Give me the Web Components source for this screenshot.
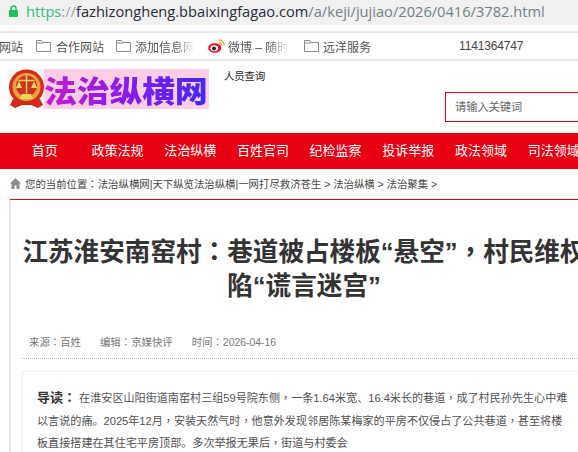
<!DOCTYPE html>
<html lang="zh"><head><meta charset="utf-8"><style>
html,body{margin:0;padding:0;background:#fff;width:578px;height:452px;overflow:hidden;font-family:"Liberation Sans","Noto Sans CJK SC",sans-serif}
page-root{display:block;width:578px;height:452px;overflow:hidden}
</style></head><body>
<page-root></page-root>
<script>
const def=(n,html)=>{customElements.define(n,class extends HTMLElement{constructor(){super();this.attachShadow({mode:'open'}).innerHTML=html}})};
const F='"Liberation Sans","Noto Sans CJK SC",sans-serif';
const P=s=>s.replace(/[：，]/g,m=>`<span lang='zh-TW' style='font-family:"Noto Sans CJK TC";line-height:1'>${m}</span>`);
const folder='<svg width="15" height="12" viewBox="0 0 15 12" fill="none" stroke="#8a8a8a"><path d="M.5 11.500V.5h5l1.500 2h7.500v9z"/><path d="M.5 3h6.500"/></svg>';
def('url-bar',`<style>:host{display:flex;align-items:center;height:25px;box-sizing:border-box;padding-bottom:3px;background:#f1f1f1;font:14.650px "Open Sans",sans-serif;white-space:nowrap;overflow:hidden;position:relative}
svg{flex:none;margin-left:9px;margin-right:8px}.g{color:#35bb80}.s{color:#9aa0a6}.d{color:#222b3a}.p{color:#6f7f88}</style>
<svg width="9" height="12" viewBox="0 0 9 12"><path d="M2 5.500V3.500a2.500 2.500 0 0 1 5 0v2" fill="none" stroke="#1fc15e" stroke-width="1.500"/><rect x="0" y="5" width="9" height="7" rx=".8" fill="#1fc15e"/></svg>
<span class="g">https</span><span class="s">://</span><span class="d">fazhizongheng.bbaixingfagao.com</span><span class="p">/a/keji/jujiao/2026/0416/3782.html</span>`);
def('book-bar',`<style>:host{display:block;height:30px;box-sizing:border-box;margin-top:6px;border-top:2px solid #e9e9e9;border-bottom:2px solid #e9e9e9;color:#333;position:relative;overflow:hidden}
.in{display:flex;align-items:center;height:100%;margin-left:-1px}
.n{position:absolute;left:459px;top:6px;font:12px "Liberation Sans",sans-serif;letter-spacing:-.15px;color:#444}
a{display:flex;align-items:center;font:12px ${F};white-space:nowrap;flex:none}a svg{margin-right:5px;flex:none}
.fade{-webkit-mask-image:linear-gradient(90deg,#000 65%,transparent 100%);mask-image:linear-gradient(90deg,#000 65%,transparent 100%);color:#555}</style>
<div class="in">
<a style="width:37px;color:#555">网站</a>
<a style="width:80px;color:#555">${folder}合作网站</a>
<a style="width:92px;color:#555">${folder}<span class="fade" style="margin-left:-1px">添加信息网</span></a>
<a style="width:96px"><svg width="17" height="14" viewBox="0 0 17 14" style="margin-right:3px"><ellipse cx="6.800" cy="9" rx="6.600" ry="4.800" fill="#e6162d"/><ellipse cx="6.300" cy="9.300" rx="3.800" ry="3" fill="#fff"/><circle cx="6" cy="9.500" r="1.900" fill="#222"/><path d="M10.500 1a5 5 0 0 1 5.500 5.500M10.800 3.600a2.300 2.300 0 0 1 2.700 2.700" fill="none" stroke="#f5a623" stroke-width="1.400"/></svg><span class="fade">微博 – 随时</span></a>
<a style="width:140px;color:#555">${folder}<span style="margin-left:-1px">远洋服务</span></a>
</div><span class="n">1141364747</span>`);
def('site-head',`<style>:host{display:block;height:72px;position:relative}
.row{display:flex;align-items:flex-start;padding:8px 0 0 9px}
.logo{display:flex;width:200px;height:40px;flex:none}
.em{width:35px;height:40px;flex:none;background:#f6f6f2}
.t{flex:1;background:#fccfe6;font:900 33px/40px "Noto Sans CJK SC",sans-serif;white-space:nowrap;letter-spacing:-.3px}
.t span{display:inline-block;height:40px;transform:scaleY(.9);transform-origin:50% 50%;background:linear-gradient(90deg,#c81bd0,#7a1cf0 60%,#3d2cf4);-webkit-background-clip:text;background-clip:text;color:transparent}
.q{font:10.300px/14px ${F};color:#222;margin:0 0 0 15px;padding-top:1px}
.s{position:absolute;left:445px;top:31px;width:140px;height:30px;box-sizing:border-box;border:1px solid #e60012;font:11.200px/29px ${F};color:#666;padding-left:9px}</style>
<div class="row"><div class="logo"><div class="em"><svg width="35" height="40" viewBox="0 0 35 40"><path d="M4 30l-3 6 5 3 7-3h9l7 3 5-3-3-6z" fill="#d62b1f"/><circle cx="17.500" cy="18" r="17.500" fill="#d8291c"/><circle cx="17.500" cy="18" r="14" fill="#e3a63b"/><circle cx="17.500" cy="17" r="10.500" fill="#d23020"/><path d="M17.500 6.500v18M9.500 11.500h16" stroke="#f3d262" stroke-width="1.600"/><path d="M10 12l-3 7h6zM25 12l-3 7h6z" fill="#f3d262"/><path d="M11 30l2-5h9l2 5z" fill="#f3d262"/><path d="M8 33h19" stroke="#c7301f" stroke-width="2"/></svg></div><div class="t"><span>法治纵横网</span></div></div><div class="q">人员查询</div></div><div class="s">请输入关键词</div>`);
def('main-nav',`<style>:host{display:block;height:36px;background:#e60012;overflow:hidden}
ul{display:flex;margin:0;padding:0;list-style:none;width:660px}li{width:72.700px;text-align:center;color:#fff;font:13px/36px ${F};white-space:nowrap;flex:none}li:first-child{margin-left:8.500px}</style>
<ul><li>首页</li><li>政策法规</li><li>法治纵横</li><li>百姓官司</li><li>纪检监察</li><li>投诉举报</li><li>政法领域</li><li>司法领域</li></ul>`);
def('crumb-bar',`<style>:host{display:flex;align-items:center;height:30px;padding:0 0 2px 10px;font:10.400px ${F};color:#444;white-space:nowrap;gap:4px;box-sizing:border-box}svg{flex:none}</style>
<svg width="11" height="11" viewBox="0 0 11 11"><path d="M5.500 0L0 5.500h1.500V11h3V7.500h2V11h3V5.500H11z" fill="#8c8c8c"/></svg><span>${P('您的当前位置：法治纵横网|天下纵览法治纵横|一网打尽救济苍生 &gt; 法治纵横 &gt; 法治聚集 &gt;')}</span>`);
def('meta-row',`<style>:host{display:flex;gap:19px;margin:17px 0 0 11px;height:20px;padding:0 0 5px 7px;border-bottom:1px dotted #aaa;font:10.400px/20px ${F};color:#777;white-space:nowrap;width:620px}</style>
<span>${P('来源：百姓')}</span><span>${P('编辑：京媒快评')}</span><span>${P('时间：2026-04-16')}</span>`);
def('lead-box',`<style>:host{display:block;margin:12px 0 0 11px;width:620px;border:1px solid #eee;border-right:0;padding:15px 0 0 14px;font:11.100px/22.500px ${F};color:#505050;height:90px;white-space:nowrap}
b{font:bold 13px/1 ${F};color:#333}</style><b>${P('导读：')}</b> ${P('在淮安区山阳街道南窑村三组59号院东侧，一条1.64米宽、16.4米长的巷道，成了村民孙先生心中难')}<br>${P('以言说的痛。2025年12月，安装天然气时，他意外发现邻居陈某梅家的平房不仅侵占了公共巷道，甚至将楼')}<br>${P('板直接搭建在其住宅平房顶部。多次举报无果后，街道与村委会')}`);
def('article-card',`<style>:host{display:block;margin:0 0 0 9px;border-top:1px solid #e60012;border-left:2px solid #e4e4e4;height:260px;overflow:hidden;width:640px;box-sizing:border-box}
h1{margin:36px 0 0 1px;width:584px;text-align:center;font:bold 25.600px/33.500px ${F};color:#333;height:80px;white-space:nowrap}
</style><h1>${P('江苏淮安南窑村：巷道被占楼板“悬空”，村民维权')}<br>陷“谎言迷宫”</h1><slot></slot>`);
def('page-root',`<style>:host{display:block}</style><url-bar></url-bar><book-bar></book-bar><site-head></site-head><main-nav></main-nav><crumb-bar></crumb-bar>
<article-card><meta-row></meta-row><lead-box></lead-box></article-card>`);
</script></body></html>
